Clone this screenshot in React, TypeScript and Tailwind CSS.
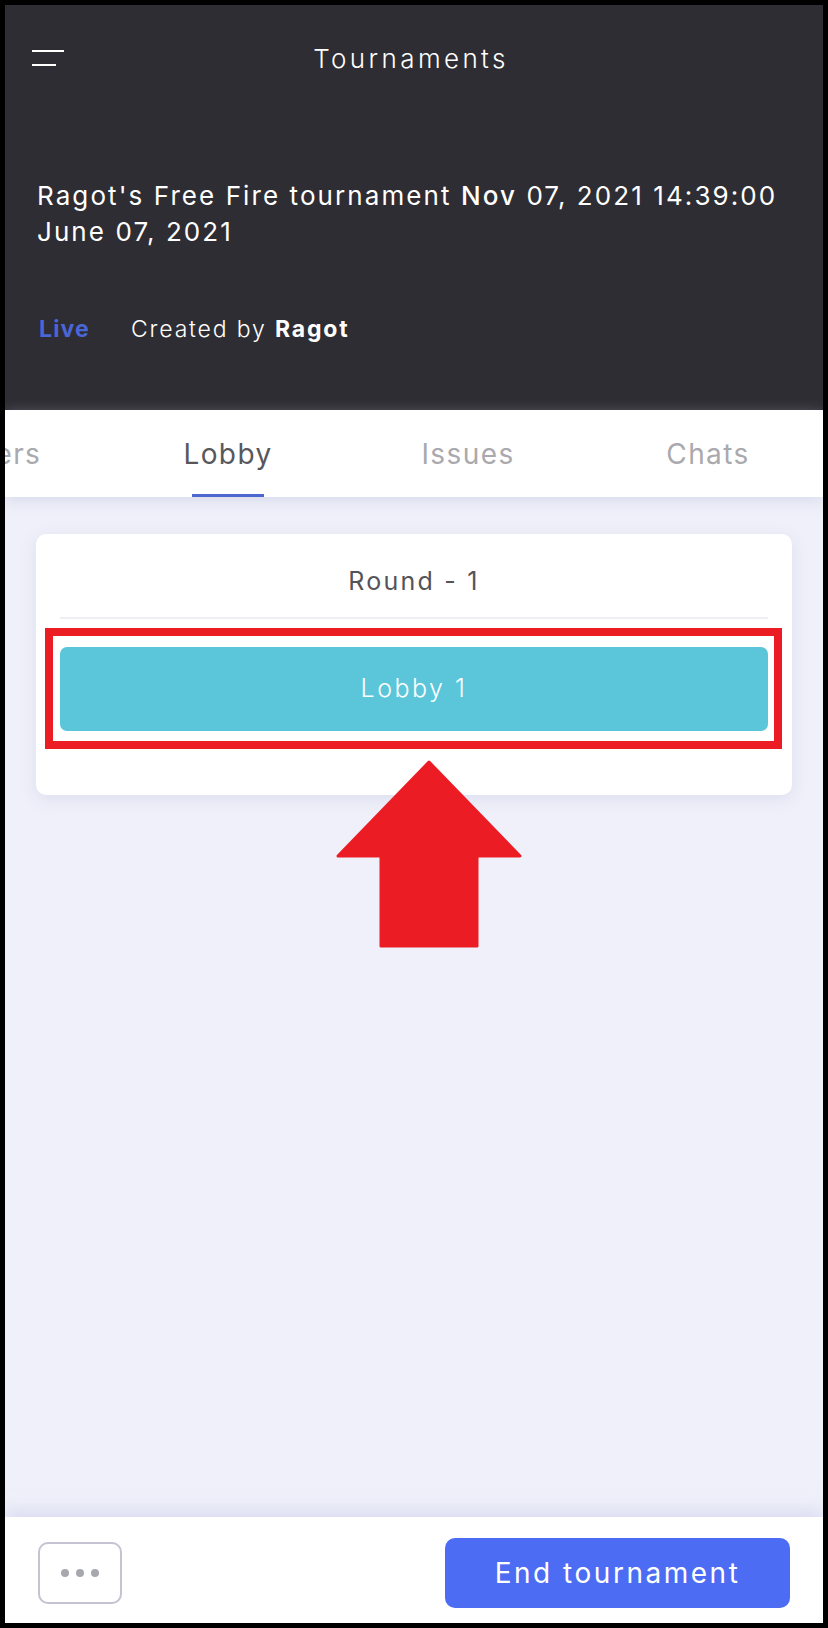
import React from "react";

const font = { fontFamily: "Inter, 'Noto Sans', sans-serif" };

function Arrow() {
  return (
    <svg
      className="absolute left-[331px] top-[755px]"
      width="186"
      height="188"
      viewBox="0 0 186 188"
    >
      <polygon
        points="93,2 184,96 141,96 141,186 45,186 45,96 2,96"
        fill="#ec1c24"
        stroke="#ec1c24"
        strokeWidth="3"
        strokeLinejoin="round"
      />
    </svg>
  );
}

export default function App() {
  return (
    <div className="w-[828px] h-[1628px] bg-black p-[5px]" style={font}>
      <div className="relative flex flex-col h-full bg-[#eff0f9] overflow-hidden">
        {/* Header */}
        <header className="h-[405px] shrink-0 bg-[#2e2d33] px-[32px] text-white">
          <div className="relative h-[108px] flex items-center justify-center">
            <div className="absolute left-[-5px] top-[45px] flex flex-col gap-[12px]">
              <span className="block w-[32px] h-[2px] bg-white" />
              <span className="block w-[24px] h-[2px] bg-white" />
            </div>
            <span className="text-[26px] leading-[30px] font-light tracking-[0.13em] ml-[-6px]">
              Tournaments
            </span>
          </div>
          <h1 className="mt-[65px] text-[26px] leading-[36px] font-normal tracking-[0.08em] whitespace-nowrap">
            Ragot's Free Fire tournament <span className="font-medium">Nov</span> 07, 2021 14:39:00
            <br />
            June 07, 2021
          </h1>
          <div className="mt-[64px] flex items-center h-[30px] text-[23px] leading-[30px]">
            <span className="font-bold text-[#4a65d6] ml-[2px] tracking-[0.05em]">Live</span>
            <span className="ml-[41px] font-light tracking-[0.08em]">
              Created by <span className="font-bold">Ragot</span>
            </span>
          </div>
        </header>

        {/* Tabs */}
        <nav className="relative z-10 h-[87px] shrink-0 bg-white overflow-hidden shadow-[0_4px_14px_rgba(190,192,220,0.45)]">
          <div className="flex h-full ml-[-137px] text-[28px] tracking-[0.05em]">
            <div className="w-[240px] shrink-0 flex items-center justify-center text-[#a9a9ae]">
              Players
            </div>
            <div className="relative w-[240px] shrink-0 flex items-center justify-center text-[#58585c]">
              Lobby
              <span className="absolute bottom-0 left-1/2 -translate-x-1/2 w-[72px] h-[3px] bg-[#4d67d1]" />
            </div>
            <div className="w-[240px] shrink-0 flex items-center justify-center text-[#a9a9ae]">
              Issues
            </div>
            <div className="w-[240px] shrink-0 flex items-center justify-center text-[#a9a9ae]">
              Chats
            </div>
          </div>
        </nav>

        {/* Content */}
        <main className="flex-1 px-[31px] pt-[37px]">
          <div className="bg-white rounded-[10px] px-[24px] pt-[33px] pb-[64px] shadow-[0_4px_16px_rgba(200,202,228,0.45)]">
            <div className="h-[30px] flex items-center justify-center text-[25px] text-[#545458] tracking-[0.09em]">
              Round - 1
            </div>
            <div className="mt-[20px] h-[2px] bg-[#eeeff5]" />
            <div className="relative mt-[28px]">
              <div className="h-[84px] rounded-[7px] bg-[#5bc6d9] flex items-center justify-center text-white text-[25px] font-light tracking-[0.1em]">
                Lobby 1
              </div>
              <div className="absolute left-[-15px] right-[-14px] top-[-19px] bottom-[-18px] border-[8px] border-[#ec1c24]" />
            </div>
          </div>
        </main>

        <Arrow />

        {/* Footer */}
        <footer className="relative z-10 h-[106px] shrink-0 bg-white px-[33px] pt-[6px] flex items-center justify-between shadow-[0_-6px_16px_rgba(200,202,235,0.55)]">
          <button className="w-[84px] h-[62px] rounded-[10px] border-2 border-[#c3c3d1] flex items-center justify-center gap-[7px]">
            <span className="w-[8px] h-[8px] rounded-full bg-[#a7a7ae]" />
            <span className="w-[8px] h-[8px] rounded-full bg-[#a7a7ae]" />
            <span className="w-[8px] h-[8px] rounded-full bg-[#a7a7ae]" />
          </button>
          <button className="w-[345px] h-[70px] rounded-[10px] bg-[#4b6cf3] text-white text-[28px] tracking-[0.09em] flex items-center justify-center">
            End tournament
          </button>
        </footer>
      </div>
    </div>
  );
}
